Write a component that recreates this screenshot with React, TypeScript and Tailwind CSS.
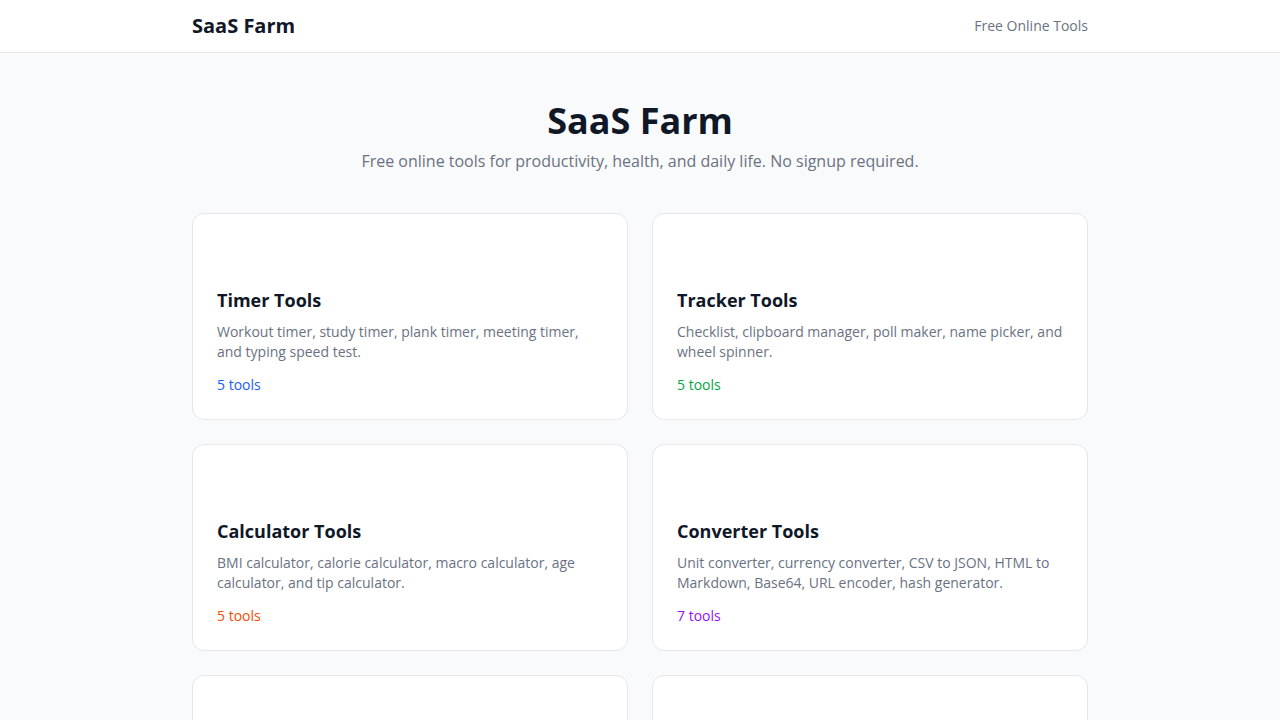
import React from "react";

const cards = [
  { title: "Timer Tools", desc: "Workout timer, study timer, plank timer, meeting timer, and typing speed test.", count: "5 tools", color: "text-blue-600" },
  { title: "Tracker Tools", desc: "Checklist, clipboard manager, poll maker, name picker, and wheel spinner.", count: "5 tools", color: "text-green-600" },
  { title: "Calculator Tools", desc: "BMI calculator, calorie calculator, macro calculator, age calculator, and tip calculator.", count: "5 tools", color: "text-orange-600" },
  { title: "Converter Tools", desc: "Unit converter, currency converter, CSV to JSON, HTML to Markdown, Base64, URL encoder, hash generator.", count: "7 tools", color: "text-purple-600" },
  { title: "Generator Tools", desc: "Password generator, QR code generator, lorem ipsum, and color palette generator.", count: "4 tools", color: "text-pink-600" },
  { title: "Text Tools", desc: "Word counter, case converter, text diff, and markdown preview.", count: "4 tools", color: "text-teal-600" },
];

export default function App() {
  return (
    <div className="min-h-screen bg-gray-50" style={{ fontFamily: '"Open Sans", "Noto Sans", sans-serif' }}>
      <header className="bg-white border-b border-gray-200">
        <div className="max-w-4xl mx-auto h-[52px] flex items-center justify-between">
          <span className="text-xl font-bold text-gray-900">SaaS Farm</span>
          <span className="text-sm text-gray-500">Free Online Tools</span>
        </div>
      </header>
      <main className="max-w-4xl mx-auto py-12">
        <div className="text-center mb-10">
          <h1 className="text-4xl font-bold text-gray-900 mb-2">SaaS Farm</h1>
          <p className="text-base leading-6 text-gray-500">Free online tools for productivity, health, and daily life. No signup required.</p>
        </div>
        <div className="grid grid-cols-2 gap-6">
          {cards.map((c) => (
            <div key={c.title} className="bg-white border border-gray-200 rounded-xl p-6">
              <div className="h-9 mb-3" />
              <h2 className="text-lg font-bold text-gray-900">{c.title}</h2>
              <p className="text-sm text-gray-500 mt-2">{c.desc}</p>
              <p className={`text-sm mt-[13px] ${c.color}`}>{c.count}</p>
            </div>
          ))}
        </div>
      </main>
    </div>
  );
}
